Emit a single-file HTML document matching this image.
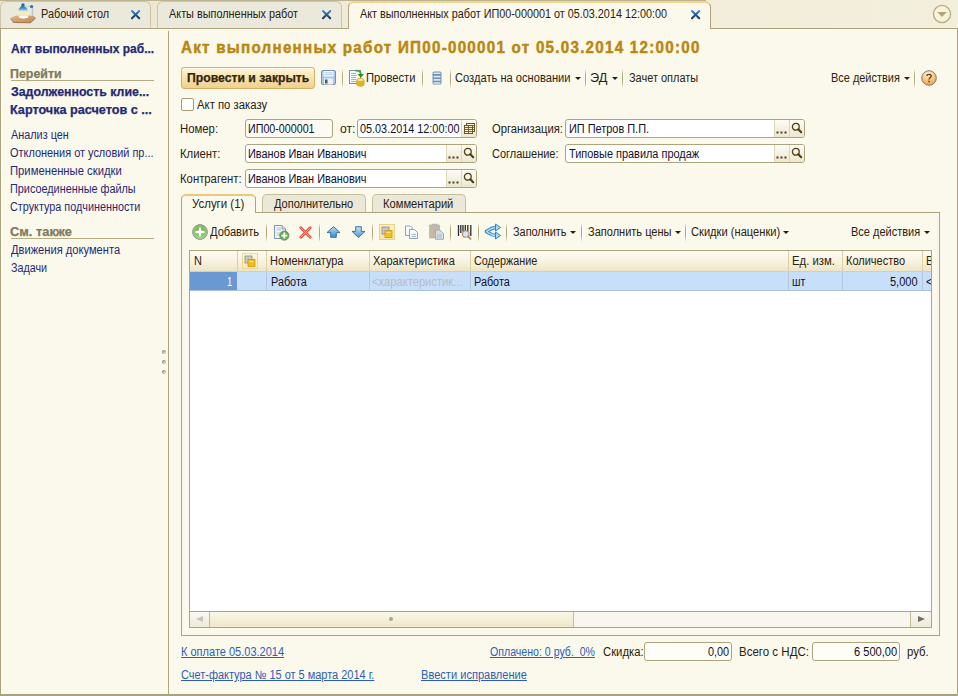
<!DOCTYPE html>
<html><head><meta charset="utf-8">
<style>
*{box-sizing:border-box;margin:0;padding:0}
html,body{width:958px;height:696px;overflow:hidden}
body{position:relative;background:#FBF9EC;font-family:"Liberation Sans",sans-serif;font-size:12px;color:#2A2210}
.a{position:absolute}
svg{position:absolute;display:block}
.t{position:absolute;white-space:nowrap;line-height:14px;font-size:12px}
</style></head><body>
<div class="a" style="left:0px;top:0px;width:958px;height:29px;background:linear-gradient(90deg,#ECE6CC,#F1ECD6 45%,#F3EFDD);border-bottom:1px solid #ADA47D"></div>
<div class="a" style="left:0px;top:0px;width:706px;height:1px;background:#BDB592"></div>
<div class="a" style="left:0px;top:1px;width:151px;height:27px;background:#EBE9DC;border:1px solid #CDC6A6;border-bottom:none;border-radius:6px 6px 0 0"></div>
<div class="a" style="left:157px;top:1px;width:185px;height:27px;background:#EBE9DC;border:1px solid #CDC6A6;border-bottom:none;border-radius:6px 6px 0 0"></div>
<div class="a" style="left:348px;top:1px;width:363px;height:28px;background:#FBF9EC;border:1px solid #ADA47D;border-top:2px solid #F5D48E;border-bottom:none;border-radius:6px 6px 0 0"></div>
<div class="t" style="top:7px;color:#2A2210;font-size:12px;left:40.60px;transform:scaleX(0.9048);transform-origin:0 0;">Рабочий стол</div>
<div class="t" style="top:7px;color:#2A2210;font-size:12px;left:169.31px;transform:scaleX(0.9064);transform-origin:0 0;">Акты выполненных работ</div>
<div class="t" style="top:7px;color:#2A2210;font-size:12px;left:360.31px;transform:scaleX(0.9020);transform-origin:0 0;">Акт выполненных работ ИП00-000001 от 05.03.2014 12:00:00</div>
<div class="a" style="left:0px;top:28px;width:1px;height:668px;background:#A9A27C"></div>
<div class="a" style="left:1px;top:29px;width:1px;height:665px;background:#FFFFF6"></div>
<div class="a" style="left:957px;top:28px;width:1px;height:668px;background:#A9A27C"></div>
<div class="a" style="left:0px;top:694px;width:958px;height:2px;background:#A9A27C"></div>
<div class="a" style="left:168px;top:31px;width:1px;height:663px;background:#ADA47D"></div>
<div class="t" style="top:42px;color:#1F2A74;font-size:12px;font-weight:bold;-webkit-text-stroke:0.25px currentColor;left:10.70px;transform:scaleX(0.9972);transform-origin:0 0;">Акт выполненных раб...</div>
<div class="t" style="top:67px;color:#827A5A;font-size:12px;font-weight:bold;-webkit-text-stroke:0.25px currentColor;left:10.17px;transform:scaleX(1.0352);transform-origin:0 0;">Перейти</div>
<div class="a" style="left:11px;top:80px;width:143px;height:1px;background:#B5AC84"></div>
<div class="t" style="top:85px;color:#1F2A74;font-size:12px;font-weight:bold;-webkit-text-stroke:0.25px currentColor;left:10.69px;transform:scaleX(1.0293);transform-origin:0 0;">Задолженность клие...</div>
<div class="t" style="top:103px;color:#1F2A74;font-size:12px;font-weight:bold;-webkit-text-stroke:0.25px currentColor;left:10.16px;transform:scaleX(1.0526);transform-origin:0 0;">Карточка расчетов с ...</div>
<div class="t" style="top:128px;color:#1F2A74;font-size:12px;left:10.91px;transform:scaleX(0.9048);transform-origin:0 0;">Анализ цен</div>
<div class="t" style="top:146px;color:#1F2A74;font-size:12px;left:10.45px;transform:scaleX(0.9103);transform-origin:0 0;">Отклонения от условий пр...</div>
<div class="t" style="top:164px;color:#1F2A74;font-size:12px;left:10.06px;transform:scaleX(0.9386);transform-origin:0 0;">Примененные скидки</div>
<div class="t" style="top:182px;color:#1F2A74;font-size:12px;left:10.10px;transform:scaleX(0.9038);transform-origin:0 0;">Присоединенные файлы</div>
<div class="t" style="top:200px;color:#1F2A74;font-size:12px;left:10.46px;transform:scaleX(0.9015);transform-origin:0 0;">Структура подчиненности</div>
<div class="t" style="top:225px;color:#827A5A;font-size:12px;font-weight:bold;-webkit-text-stroke:0.25px currentColor;left:10.46px;transform:scaleX(1.0721);transform-origin:0 0;">См. также</div>
<div class="a" style="left:11px;top:238px;width:143px;height:1px;background:#B5AC84"></div>
<div class="t" style="top:243px;color:#1F2A74;font-size:12px;left:10.91px;transform:scaleX(0.9277);transform-origin:0 0;">Движения документа</div>
<div class="t" style="top:261px;color:#1F2A74;font-size:12px;left:10.64px;transform:scaleX(0.8951);transform-origin:0 0;">Задачи</div>
<div class="t" style="left:181px;top:37px;font-size:16.5px;line-height:20px;font-weight:bold;letter-spacing:1.36px;transform:scaleX(0.92);transform-origin:0 0;color:#BA860C;-webkit-text-stroke:0.45px #BA860C">Акт выполненных работ ИП00-000001 от 05.03.2014 12:00:00</div>
<div class="a" style="left:181px;top:67px;width:134px;height:22px;border:1px solid #D5B066;border-radius:3px;background:linear-gradient(#FFF6DA,#F8E4B0 45%,#EFD08E);box-shadow:inset 0 1px 0 #FFFBEE"></div>
<div class="t" style="top:71px;color:#33250C;font-size:12px;font-weight:bold;-webkit-text-stroke:0.25px currentColor;left:186.69px;transform:scaleX(1.0168);transform-origin:0 0;">Провести и закрыть</div>
<div class="t" style="top:71px;color:#2A2210;font-size:12px;left:366.07px;transform:scaleX(0.9318);transform-origin:0 0;">Провести</div>
<div class="t" style="top:71px;color:#2A2210;font-size:12px;left:455.44px;transform:scaleX(0.9277);transform-origin:0 0;">Создать на основании</div>
<div class="t" style="top:71px;color:#2A2210;font-size:12px;left:590.37px;transform:scaleX(1.0581);transform-origin:0 0;">ЭД</div>
<div class="t" style="top:71px;color:#2A2210;font-size:12px;left:628.63px;transform:scaleX(0.9128);transform-origin:0 0;">Зачет оплаты</div>
<div class="t" style="top:71px;color:#2A2210;font-size:12px;left:830.59px;transform:scaleX(0.9118);transform-origin:0 0;">Все действия</div>
<div class="a" style="left:575px;top:77px;width:0;height:0;border-left:3px solid transparent;border-right:3px solid transparent;border-top:3px solid #2A1E08"></div>
<div class="a" style="left:612px;top:77px;width:0;height:0;border-left:3px solid transparent;border-right:3px solid transparent;border-top:3px solid #2A1E08"></div>
<div class="a" style="left:904px;top:77px;width:0;height:0;border-left:3px solid transparent;border-right:3px solid transparent;border-top:3px solid #2A1E08"></div>
<div class="a" style="left:342px;top:69px;width:1px;height:19px;background:linear-gradient(rgba(170,160,120,0),#B0A67C 30%,#B0A67C 70%,rgba(170,160,120,0))"></div>
<div class="a" style="left:343px;top:69px;width:1px;height:19px;background:linear-gradient(rgba(255,255,255,0),#FFFFFF 30%,#FFFFFF 70%,rgba(255,255,255,0))"></div>
<div class="a" style="left:422px;top:69px;width:1px;height:19px;background:linear-gradient(rgba(170,160,120,0),#B0A67C 30%,#B0A67C 70%,rgba(170,160,120,0))"></div>
<div class="a" style="left:423px;top:69px;width:1px;height:19px;background:linear-gradient(rgba(255,255,255,0),#FFFFFF 30%,#FFFFFF 70%,rgba(255,255,255,0))"></div>
<div class="a" style="left:450px;top:69px;width:1px;height:19px;background:linear-gradient(rgba(170,160,120,0),#B0A67C 30%,#B0A67C 70%,rgba(170,160,120,0))"></div>
<div class="a" style="left:451px;top:69px;width:1px;height:19px;background:linear-gradient(rgba(255,255,255,0),#FFFFFF 30%,#FFFFFF 70%,rgba(255,255,255,0))"></div>
<div class="a" style="left:585px;top:69px;width:1px;height:19px;background:linear-gradient(rgba(170,160,120,0),#B0A67C 30%,#B0A67C 70%,rgba(170,160,120,0))"></div>
<div class="a" style="left:586px;top:69px;width:1px;height:19px;background:linear-gradient(rgba(255,255,255,0),#FFFFFF 30%,#FFFFFF 70%,rgba(255,255,255,0))"></div>
<div class="a" style="left:622px;top:69px;width:1px;height:19px;background:linear-gradient(rgba(170,160,120,0),#B0A67C 30%,#B0A67C 70%,rgba(170,160,120,0))"></div>
<div class="a" style="left:623px;top:69px;width:1px;height:19px;background:linear-gradient(rgba(255,255,255,0),#FFFFFF 30%,#FFFFFF 70%,rgba(255,255,255,0))"></div>
<div class="a" style="left:914px;top:69px;width:1px;height:19px;background:linear-gradient(rgba(170,160,120,0),#B0A67C 30%,#B0A67C 70%,rgba(170,160,120,0))"></div>
<div class="a" style="left:915px;top:69px;width:1px;height:19px;background:linear-gradient(rgba(255,255,255,0),#FFFFFF 30%,#FFFFFF 70%,rgba(255,255,255,0))"></div>
<div class="a" style="left:181px;top:98px;width:13px;height:13px;border:1px solid #A39B76;border-radius:2px;background:#fff"></div>
<div class="t" style="top:98px;color:#2A2210;font-size:12px;left:197.21px;transform:scaleX(0.9434);transform-origin:0 0;">Акт по заказу</div>
<div class="t" style="top:122px;color:#2A2210;font-size:12px;left:180.35px;transform:scaleX(0.9450);transform-origin:0 0;">Номер:</div>
<div class="t" style="top:147px;color:#2A2210;font-size:12px;left:180.36px;transform:scaleX(0.9435);transform-origin:0 0;">Клиент:</div>
<div class="t" style="top:172px;color:#2A2210;font-size:12px;left:180.36px;transform:scaleX(0.9431);transform-origin:0 0;">Контрагент:</div>
<div class="t" style="top:122px;color:#2A2210;font-size:12px;left:340.39px;transform:scaleX(1.0147);transform-origin:0 0;">от:</div>
<div class="t" style="top:122px;color:#2A2210;font-size:12px;left:492.14px;transform:scaleX(0.9365);transform-origin:0 0;">Организация:</div>
<div class="t" style="top:147px;color:#2A2210;font-size:12px;left:492.15px;transform:scaleX(0.9142);transform-origin:0 0;">Соглашение:</div>
<div class="a" style="left:245px;top:119px;width:88px;height:19px;border:1px solid #ADA37C;border-radius:3px;background:#FCFAF2"></div>
<div class="a" style="left:357px;top:119px;width:120px;height:19px;border:1px solid #ADA37C;border-radius:3px;background:#fff"></div>
<div class="a" style="left:461px;top:120px;width:15px;height:17px;border-left:1px solid #DDD6B8;background:linear-gradient(#FDFCF6,#EDE7D0);border-radius:0 2px 2px 0"></div>
<div class="a" style="left:245px;top:144px;width:232px;height:19px;border:1px solid #ADA37C;border-radius:3px;background:#fff"></div>
<div class="a" style="left:446px;top:145px;width:15px;height:17px;border-left:1px solid #DDD6B8;background:linear-gradient(#FDFCF6,#EDE7D0)"></div>
<div class="a" style="left:461px;top:145px;width:15px;height:17px;border-left:1px solid #DDD6B8;background:linear-gradient(#FDFCF6,#EDE7D0);border-radius:0 2px 2px 0"></div>
<div class="a" style="left:245px;top:169px;width:232px;height:19px;border:1px solid #ADA37C;border-radius:3px;background:#fff"></div>
<div class="a" style="left:446px;top:170px;width:15px;height:17px;border-left:1px solid #DDD6B8;background:linear-gradient(#FDFCF6,#EDE7D0)"></div>
<div class="a" style="left:461px;top:170px;width:15px;height:17px;border-left:1px solid #DDD6B8;background:linear-gradient(#FDFCF6,#EDE7D0);border-radius:0 2px 2px 0"></div>
<div class="a" style="left:565px;top:119px;width:240px;height:19px;border:1px solid #ADA37C;border-radius:3px;background:#fff"></div>
<div class="a" style="left:774px;top:120px;width:15px;height:17px;border-left:1px solid #DDD6B8;background:linear-gradient(#FDFCF6,#EDE7D0)"></div>
<div class="a" style="left:789px;top:120px;width:15px;height:17px;border-left:1px solid #DDD6B8;background:linear-gradient(#FDFCF6,#EDE7D0);border-radius:0 2px 2px 0"></div>
<div class="a" style="left:565px;top:144px;width:240px;height:19px;border:1px solid #ADA37C;border-radius:3px;background:#fff"></div>
<div class="a" style="left:774px;top:145px;width:15px;height:17px;border-left:1px solid #DDD6B8;background:linear-gradient(#FDFCF6,#EDE7D0)"></div>
<div class="a" style="left:789px;top:145px;width:15px;height:17px;border-left:1px solid #DDD6B8;background:linear-gradient(#FDFCF6,#EDE7D0);border-radius:0 2px 2px 0"></div>
<div class="t" style="top:122px;color:#10102A;font-size:12px;left:247.61px;transform:scaleX(0.8919);transform-origin:0 0;">ИП00-000001</div>
<div class="t" style="top:122px;color:#10102A;font-size:12px;left:359.55px;transform:scaleX(0.9038);transform-origin:0 0;">05.03.2014 12:00:00</div>
<div class="t" style="top:147px;color:#10102A;font-size:12px;left:248.09px;transform:scaleX(0.9097);transform-origin:0 0;">Иванов Иван Иванович</div>
<div class="t" style="top:172px;color:#10102A;font-size:12px;left:248.09px;transform:scaleX(0.9097);transform-origin:0 0;">Иванов Иван Иванович</div>
<div class="t" style="top:122px;color:#10102A;font-size:12px;left:568.5px;transform:scaleX(0.91);transform-origin:0 0;">ИП Петров П.П.</div>
<div class="t" style="top:147px;color:#10102A;font-size:12px;left:568.5px;transform:scaleX(0.91);transform-origin:0 0;">Типовые правила продаж</div>
<div class="a" style="left:181px;top:212px;width:759px;height:424px;border:1px solid #ADA47D"></div>
<div class="a" style="left:262px;top:194px;width:104px;height:18px;background:#EBE8D8;border:1px solid #C6BE9C;border-bottom:none;border-radius:5px 5px 0 0"></div>
<div class="a" style="left:372px;top:194px;width:94px;height:18px;background:#EBE8D8;border:1px solid #C6BE9C;border-bottom:none;border-radius:5px 5px 0 0"></div>
<div class="a" style="left:181px;top:194px;width:75px;height:19px;background:#FBF9EC;border:1px solid #ADA47D;border-top:2px solid #EDC77E;border-bottom:none;border-radius:5px 5px 0 0"></div>
<div class="t" style="top:197px;color:#2A2210;font-size:12px;left:192.32px;transform:scaleX(0.9535);transform-origin:0 0;">Услуги (1)</div>
<div class="t" style="top:197px;color:#2A2210;font-size:12px;left:274.21px;transform:scaleX(0.9172);transform-origin:0 0;">Дополнительно</div>
<div class="t" style="top:197px;color:#2A2210;font-size:12px;left:382.87px;transform:scaleX(0.9309);transform-origin:0 0;">Комментарий</div>
<div class="t" style="top:225px;color:#2A2210;font-size:12px;left:210.11px;transform:scaleX(0.9256);transform-origin:0 0;">Добавить</div>
<div class="t" style="top:225px;color:#2A2210;font-size:12px;left:512.84px;transform:scaleX(0.9069);transform-origin:0 0;">Заполнить</div>
<div class="t" style="top:225px;color:#2A2210;font-size:12px;left:587.93px;transform:scaleX(0.9186);transform-origin:0 0;">Заполнить цены</div>
<div class="t" style="top:225px;color:#2A2210;font-size:12px;left:691.14px;transform:scaleX(0.9273);transform-origin:0 0;">Скидки (наценки)</div>
<div class="t" style="top:225px;color:#2A2210;font-size:12px;left:850.58px;transform:scaleX(0.9159);transform-origin:0 0;">Все действия</div>
<div class="a" style="left:570px;top:231px;width:0;height:0;border-left:3px solid transparent;border-right:3px solid transparent;border-top:3px solid #2A1E08"></div>
<div class="a" style="left:675px;top:231px;width:0;height:0;border-left:3px solid transparent;border-right:3px solid transparent;border-top:3px solid #2A1E08"></div>
<div class="a" style="left:783px;top:231px;width:0;height:0;border-left:3px solid transparent;border-right:3px solid transparent;border-top:3px solid #2A1E08"></div>
<div class="a" style="left:924px;top:231px;width:0;height:0;border-left:3px solid transparent;border-right:3px solid transparent;border-top:3px solid #2A1E08"></div>
<div class="a" style="left:266px;top:223px;width:1px;height:19px;background:linear-gradient(rgba(170,160,120,0),#B0A67C 30%,#B0A67C 70%,rgba(170,160,120,0))"></div>
<div class="a" style="left:267px;top:223px;width:1px;height:19px;background:linear-gradient(rgba(255,255,255,0),#FFFFFF 30%,#FFFFFF 70%,rgba(255,255,255,0))"></div>
<div class="a" style="left:319px;top:223px;width:1px;height:19px;background:linear-gradient(rgba(170,160,120,0),#B0A67C 30%,#B0A67C 70%,rgba(170,160,120,0))"></div>
<div class="a" style="left:320px;top:223px;width:1px;height:19px;background:linear-gradient(rgba(255,255,255,0),#FFFFFF 30%,#FFFFFF 70%,rgba(255,255,255,0))"></div>
<div class="a" style="left:372px;top:223px;width:1px;height:19px;background:linear-gradient(rgba(170,160,120,0),#B0A67C 30%,#B0A67C 70%,rgba(170,160,120,0))"></div>
<div class="a" style="left:373px;top:223px;width:1px;height:19px;background:linear-gradient(rgba(255,255,255,0),#FFFFFF 30%,#FFFFFF 70%,rgba(255,255,255,0))"></div>
<div class="a" style="left:450px;top:223px;width:1px;height:19px;background:linear-gradient(rgba(170,160,120,0),#B0A67C 30%,#B0A67C 70%,rgba(170,160,120,0))"></div>
<div class="a" style="left:451px;top:223px;width:1px;height:19px;background:linear-gradient(rgba(255,255,255,0),#FFFFFF 30%,#FFFFFF 70%,rgba(255,255,255,0))"></div>
<div class="a" style="left:478px;top:223px;width:1px;height:19px;background:linear-gradient(rgba(170,160,120,0),#B0A67C 30%,#B0A67C 70%,rgba(170,160,120,0))"></div>
<div class="a" style="left:479px;top:223px;width:1px;height:19px;background:linear-gradient(rgba(255,255,255,0),#FFFFFF 30%,#FFFFFF 70%,rgba(255,255,255,0))"></div>
<div class="a" style="left:506px;top:223px;width:1px;height:19px;background:linear-gradient(rgba(170,160,120,0),#B0A67C 30%,#B0A67C 70%,rgba(170,160,120,0))"></div>
<div class="a" style="left:507px;top:223px;width:1px;height:19px;background:linear-gradient(rgba(255,255,255,0),#FFFFFF 30%,#FFFFFF 70%,rgba(255,255,255,0))"></div>
<div class="a" style="left:581px;top:223px;width:1px;height:19px;background:linear-gradient(rgba(170,160,120,0),#B0A67C 30%,#B0A67C 70%,rgba(170,160,120,0))"></div>
<div class="a" style="left:582px;top:223px;width:1px;height:19px;background:linear-gradient(rgba(255,255,255,0),#FFFFFF 30%,#FFFFFF 70%,rgba(255,255,255,0))"></div>
<div class="a" style="left:685px;top:223px;width:1px;height:19px;background:linear-gradient(rgba(170,160,120,0),#B0A67C 30%,#B0A67C 70%,rgba(170,160,120,0))"></div>
<div class="a" style="left:686px;top:223px;width:1px;height:19px;background:linear-gradient(rgba(255,255,255,0),#FFFFFF 30%,#FFFFFF 70%,rgba(255,255,255,0))"></div>
<div class="a" style="left:189px;top:250px;width:743px;height:378px;border:1px solid #ADA47D;background:#fff"></div>
<div class="a" style="left:190px;top:251px;width:741px;height:21px;background:linear-gradient(#FDFBF3,#F7F1DC 60%,#EEE4C4);border-bottom:1px solid #D9CFA8"></div>
<div class="a" style="left:190px;top:272px;width:741px;height:19px;background:#C8DFF9;border-bottom:1px solid #A8C2E0"></div>
<div class="a" style="left:190px;top:272px;width:47px;height:18px;background:#6A98D2"></div>
<div class="a" style="left:237px;top:251px;width:1px;height:20px;background:#D9CFA8"></div>
<div class="a" style="left:266px;top:251px;width:1px;height:20px;background:#D9CFA8"></div>
<div class="a" style="left:369px;top:251px;width:1px;height:20px;background:#D9CFA8"></div>
<div class="a" style="left:470px;top:251px;width:1px;height:20px;background:#D9CFA8"></div>
<div class="a" style="left:788px;top:251px;width:1px;height:20px;background:#D9CFA8"></div>
<div class="a" style="left:842px;top:251px;width:1px;height:20px;background:#D9CFA8"></div>
<div class="a" style="left:922px;top:251px;width:1px;height:20px;background:#D9CFA8"></div>
<div class="a" style="left:266px;top:272px;width:1px;height:18px;background:#B4C8DF"></div>
<div class="a" style="left:369px;top:272px;width:1px;height:18px;background:#B4C8DF"></div>
<div class="a" style="left:470px;top:272px;width:1px;height:18px;background:#B4C8DF"></div>
<div class="a" style="left:788px;top:272px;width:1px;height:18px;background:#B4C8DF"></div>
<div class="a" style="left:842px;top:272px;width:1px;height:18px;background:#B4C8DF"></div>
<div class="a" style="left:922px;top:272px;width:1px;height:18px;background:#B4C8DF"></div>
<div class="t" style="top:254px;color:#2A2210;font-size:12px;left:193.5px;transform:scaleX(0.91);transform-origin:0 0;">N</div>
<div class="t" style="top:254px;color:#2A2210;font-size:12px;left:270.49px;transform:scaleX(0.9119);transform-origin:0 0;">Номенклатура</div>
<div class="t" style="top:254px;color:#2A2210;font-size:12px;left:372.82px;transform:scaleX(0.9168);transform-origin:0 0;">Характеристика</div>
<div class="t" style="top:254px;color:#2A2210;font-size:12px;left:474.26px;transform:scaleX(0.9014);transform-origin:0 0;">Содержание</div>
<div class="t" style="top:254px;color:#2A2210;font-size:12px;left:792.26px;transform:scaleX(0.9424);transform-origin:0 0;">Ед. изм.</div>
<div class="t" style="top:254px;color:#2A2210;font-size:12px;left:846.38px;transform:scaleX(0.9159);transform-origin:0 0;">Количество</div>
<div class="a" style="left:923px;top:251px;width:8px;height:20px;overflow:hidden"><div class="t" style="left:3px;top:3px;transform:scaleX(0.91);transform-origin:0 0">В</div></div>
<div class="a" style="left:923px;top:272px;width:8px;height:18px;overflow:hidden"><div class="t" style="left:3px;top:3px;transform:scaleX(0.91);transform-origin:0 0;color:#10102A">&lt;</div></div>
<div class="t" style="top:275px;color:#FFFFFF;font-size:12px;left:226.79px;transform:scaleX(0.7885);transform-origin:0 0;">1</div>
<div class="t" style="top:275px;color:#10102A;font-size:12px;left:270.50px;transform:scaleX(0.9041);transform-origin:0 0;">Работа</div>
<div class="t" style="top:275px;color:#B8BCC4;font-size:12px;left:372.44px;transform:scaleX(0.9319);transform-origin:0 0;">&lt;характеристик...</div>
<div class="t" style="top:275px;color:#10102A;font-size:12px;left:473.90px;transform:scaleX(0.9041);transform-origin:0 0;">Работа</div>
<div class="t" style="top:275px;color:#10102A;font-size:12px;left:792.30px;transform:scaleX(0.8794);transform-origin:0 0;">шт</div>
<div class="t" style="top:275px;color:#10102A;font-size:12px;left:890.24px;transform:scaleX(0.9175);transform-origin:0 0;">5,000</div>
<div class="a" style="left:189px;top:611px;width:743px;height:17px;border:1px solid #ADA47D;background:#F8F6EF"></div>
<div class="a" style="left:190px;top:612px;width:20px;height:15px;background:linear-gradient(#FAF8F0,#EEEAD8);border-right:1px solid #C4BB94"></div>
<div class="a" style="left:210px;top:612px;width:364px;height:15px;background:linear-gradient(#FAF7E6,#EFE8C8);border-right:1px solid #C4BB94"></div>
<div class="a" style="left:910px;top:612px;width:21px;height:15px;background:linear-gradient(#FAF8F0,#EEEAD8);border-left:1px solid #C4BB94"></div>
<div class="a" style="left:196px;top:616px;width:0;height:0;border-top:3.5px solid transparent;border-bottom:3.5px solid transparent;border-right:7px solid #C4C4BC"></div>
<div class="a" style="left:918px;top:616px;width:0;height:0;border-top:3.5px solid transparent;border-bottom:3.5px solid transparent;border-left:7px solid #707070"></div>
<div class="a" style="left:389px;top:617px;width:4px;height:4px;border-radius:2px;background:#A8A890"></div>
<div class="a" style="left:162px;top:350px;width:4px;height:4px;border-radius:2px;background:radial-gradient(circle at 65% 65%,#E4E0CC,#8E8A6C 70%)"></div>
<div class="a" style="left:162px;top:360px;width:4px;height:4px;border-radius:2px;background:radial-gradient(circle at 65% 65%,#E4E0CC,#8E8A6C 70%)"></div>
<div class="a" style="left:162px;top:370px;width:4px;height:4px;border-radius:2px;background:radial-gradient(circle at 65% 65%,#E4E0CC,#8E8A6C 70%)"></div>
<div class="t" style="top:645px;color:#2D5DB5;font-size:12px;left:180.58px;transform:scaleX(0.9180);transform-origin:0 0;text-decoration:underline;">К оплате 05.03.2014</div>
<div class="t" style="top:668px;color:#2D5DB5;font-size:12px;left:181.35px;transform:scaleX(0.9129);transform-origin:0 0;text-decoration:underline;">Счет-фактура № 15 от 5 марта 2014 г.</div>
<div class="t" style="top:645px;color:#2D5DB5;font-size:12px;left:490.17px;transform:scaleX(0.8822);transform-origin:0 0;text-decoration:underline;">Оплачено: 0 руб.&nbsp; 0%</div>
<div class="t" style="top:668px;color:#2D5DB5;font-size:12px;left:421.08px;transform:scaleX(0.9232);transform-origin:0 0;text-decoration:underline;">Ввести исправление</div>
<div class="t" style="top:645px;color:#2A2210;font-size:12px;left:603.23px;transform:scaleX(0.9420);transform-origin:0 0;">Скидка:</div>
<div class="a" style="left:644px;top:642px;width:88px;height:19px;border:1px solid #ADA37C;border-radius:3px;background:#FEFDF7"></div>
<div class="t" style="top:645px;color:#10102A;font-size:12px;left:707.65px;transform:scaleX(0.9062);transform-origin:0 0;">0,00</div>
<div class="t" style="top:645px;color:#2A2210;font-size:12px;left:739.44px;transform:scaleX(0.9590);transform-origin:0 0;">Всего с НДС:</div>
<div class="a" style="left:812px;top:642px;width:88px;height:19px;border:1px solid #ADA37C;border-radius:3px;background:#FEFDF7"></div>
<div class="t" style="top:645px;color:#10102A;font-size:12px;left:854.24px;transform:scaleX(0.9254);transform-origin:0 0;">6 500,00</div>
<div class="t" style="top:645px;color:#2A2210;font-size:12px;left:906.75px;transform:scaleX(0.9429);transform-origin:0 0;">руб.</div>
<!-- ICONS -->
<!-- lamp -->
<svg class="a" style="left:0;top:0" width="40" height="28" viewBox="0 0 40 28">
<defs><linearGradient id="wood" x1="0" y1="0" x2="1" y2="1"><stop offset="0" stop-color="#E4B888"/><stop offset="1" stop-color="#C08A58"/></linearGradient>
<linearGradient id="shade" x1="0" y1="0" x2="0" y2="1"><stop offset="0" stop-color="#145894"/><stop offset="0.6" stop-color="#3C88C4"/><stop offset="1" stop-color="#A8D4F0"/></linearGradient>
<linearGradient id="cone" x1="0" y1="0" x2="0" y2="1"><stop offset="0" stop-color="#F4EC90"/><stop offset="1" stop-color="#F8F0C8" stop-opacity="0.4"/></linearGradient></defs>
<path d="M10.5 18 L16 15.5 L33 15.5 L35.5 17.5 L30.5 21.5 L13.5 21.5 Z" fill="url(#wood)"/>
<path d="M10.5 18 L13.5 21.5 L30.5 21.5 L35.5 17.5 L35.5 18.8 L30.5 23.2 L13.5 23 L10.5 19.3 Z" fill="#A87850"/>
<ellipse cx="23.5" cy="17" rx="4.8" ry="1.4" fill="#FFFFFF" opacity="0.95"/>
<path d="M18.5 10.5 L27.5 10.5 L29 16 L17 16 Z" fill="url(#cone)"/>
<path d="M21.8 3.5 L24.2 3.5 L24.8 6 L27.3 9 L27.5 10.8 L18.5 10.8 L18.7 9 L21.2 6 Z" fill="url(#shade)"/>
<path d="M24.5 6.5 L31 6.5" stroke="#D0D6DE" stroke-width="1.4"/>
<circle cx="31.6" cy="6.6" r="1.7" fill="#2A78BC"/>
<rect x="31" y="8" width="2.2" height="8" fill="#DADCE2"/>
<rect x="32.3" y="8" width="0.9" height="8" fill="#B8BCC6"/>
</svg>
<!-- close X -->
<svg class="a" style="left:130px;top:9px" width="12" height="12" viewBox="0 0 12 12"><defs><linearGradient id="xg" x1="0" y1="0" x2="0" y2="1"><stop offset="0" stop-color="#3C86C4"/><stop offset="1" stop-color="#15355A"/></linearGradient></defs><path d="M2 2 L9.2 9.2 M9.2 2 L2 9.2" stroke="url(#xg)" stroke-width="2" stroke-linecap="round"/></svg>
<svg class="a" style="left:321px;top:9px" width="12" height="12" viewBox="0 0 12 12"><defs><linearGradient id="xg" x1="0" y1="0" x2="0" y2="1"><stop offset="0" stop-color="#3C86C4"/><stop offset="1" stop-color="#15355A"/></linearGradient></defs><path d="M2 2 L9.2 9.2 M9.2 2 L2 9.2" stroke="url(#xg)" stroke-width="2" stroke-linecap="round"/></svg>
<svg class="a" style="left:690px;top:9px" width="12" height="12" viewBox="0 0 12 12"><defs><linearGradient id="xg" x1="0" y1="0" x2="0" y2="1"><stop offset="0" stop-color="#3C86C4"/><stop offset="1" stop-color="#15355A"/></linearGradient></defs><path d="M2 2 L9.2 9.2 M9.2 2 L2 9.2" stroke="url(#xg)" stroke-width="2" stroke-linecap="round"/></svg>
<!-- top right circle -->
<svg class="a" style="left:932px;top:4px" width="20" height="20" viewBox="0 0 20 20"><circle cx="10" cy="10" r="8.6" fill="#F8F2D8" stroke="#B4AC84" stroke-width="1.3"/><path d="M5.2 8 L14.8 8 L10 13 Z" fill="#B0A878"/></svg>

<!-- floppy -->
<svg class="a" style="left:321px;top:70px" width="15" height="15" viewBox="0 0 15 15">
<rect x="0.5" y="0.5" width="14" height="14" rx="1.5" fill="#A9C8E4" stroke="#7590AC"/>
<rect x="2.5" y="1" width="10" height="5.5" fill="#F4F8FC"/>
<path d="M3.5 2.8 H11.5 M3.5 4.6 H11.5" stroke="#B0D0E8" stroke-width="1"/>
<rect x="3" y="8.5" width="9" height="6" fill="#F0F0F0"/>
<rect x="4" y="9.5" width="2.5" height="4" fill="#4A5A6A"/>
</svg>
<!-- post icon -->
<svg class="a" style="left:348px;top:69px" width="17" height="18" viewBox="0 0 17 18">
<rect x="1.5" y="1.5" width="11" height="13" fill="#F6F9FC" stroke="#7890AC"/>
<path d="M3 4.5 H8 M3 6.5 H9 M3 8.5 H8 M3 10.5 H8 M3 12.5 H8" stroke="#A4B8CC"/>
<path d="M7.5 1.8 C10.5 1.2 12.8 2.2 12.8 5.2" stroke="#4AA23A" stroke-width="1.8" fill="none"/>
<path d="M9.6 5 L16 5 L12.8 8.8 Z" fill="#2C8A1E"/>
<path d="M8.8 11 V15.6 A3.6 1.7 0 0 0 16 15.6 V11" fill="#EEC030" stroke="#C89A18" stroke-width="0.7"/>
<ellipse cx="12.4" cy="11" rx="3.6" ry="1.7" fill="#FAE68A" stroke="#C89A18" stroke-width="0.7"/>
<path d="M8.8 12.6 A3.6 1.7 0 0 0 16 12.6 M8.8 14.2 A3.6 1.7 0 0 0 16 14.2" stroke="#D0A020" stroke-width="0.7" fill="none"/>
</svg>
<!-- list icon -->
<svg class="a" style="left:432px;top:71px" width="10" height="14" viewBox="0 0 10 14">
<rect x="0.5" y="0.5" width="9" height="13" rx="1.5" fill="#7090B0"/>
<path d="M1.5 2.3 H8.5 M1.5 5.6 H8.5 M1.5 8.9 H8.5 M1.5 12 H8.5" stroke="#D8E8F4" stroke-width="1.6"/>
</svg>
<!-- help -->
<svg class="a" style="left:921px;top:70px" width="16" height="16" viewBox="0 0 16 16">
<defs><radialGradient id="hg" cx="0.45" cy="0.25" r="0.8"><stop offset="0" stop-color="#FFF4E0"/><stop offset="0.6" stop-color="#F8C070"/><stop offset="1" stop-color="#EE9A30"/></radialGradient></defs>
<circle cx="8" cy="8" r="7.3" fill="url(#hg)" stroke="#807C88" stroke-width="1"/>
<path d="M5.9 6 C5.9 3.9 10.2 3.9 10.2 6 C10.2 7.5 8 7.6 8 9.6" stroke="#6A3A18" stroke-width="1.35" fill="none"/>
<rect x="7.2" y="10.7" width="1.6" height="1.5" fill="#6A3A18"/>
</svg>
<!-- field button icons -->
<svg class="a" style="left:462px;top:121px" width="14" height="14" viewBox="0 0 14 14">
<rect x="4.5" y="2.5" width="8" height="8" fill="#F6F0DC" stroke="#6B5520"/>
<path d="M4.5 4.5 H12.5 M4.5 6.5 H12.5 M4.5 8.5 H12.5" stroke="#6B5520" stroke-width="0.8"/>
<rect x="2.5" y="4.5" width="8" height="8" fill="#F6F0DC" stroke="#6B5520"/>
<path d="M2.5 6.5 H10.5 M2.5 8.5 H10.5 M2.5 10.5 H10.5 M6.5 4.5 V12.5" stroke="#6B5520" stroke-width="0.9"/>
</svg>
<svg class="a" style="left:448px;top:156px" width="12" height="3" viewBox="0 0 12 3"><rect x="0.5" y="0.5" width="2" height="2" fill="#4E3E14"/><rect x="4.5" y="0.5" width="2" height="2" fill="#4E3E14"/><rect x="8.5" y="0.5" width="2" height="2" fill="#4E3E14"/></svg><svg class="a" style="left:463px;top:147px" width="12" height="12" viewBox="0 0 12 12"><circle cx="4.8" cy="4.8" r="3.4" stroke="#4E3E14" stroke-width="1.3" fill="none"/><path d="M7.3 7.3 L10.2 10.2" stroke="#4E3E14" stroke-width="2.1" stroke-linecap="round"/></svg>
<svg class="a" style="left:448px;top:181px" width="12" height="3" viewBox="0 0 12 3"><rect x="0.5" y="0.5" width="2" height="2" fill="#4E3E14"/><rect x="4.5" y="0.5" width="2" height="2" fill="#4E3E14"/><rect x="8.5" y="0.5" width="2" height="2" fill="#4E3E14"/></svg><svg class="a" style="left:463px;top:172px" width="12" height="12" viewBox="0 0 12 12"><circle cx="4.8" cy="4.8" r="3.4" stroke="#4E3E14" stroke-width="1.3" fill="none"/><path d="M7.3 7.3 L10.2 10.2" stroke="#4E3E14" stroke-width="2.1" stroke-linecap="round"/></svg>
<svg class="a" style="left:776px;top:131px" width="12" height="3" viewBox="0 0 12 3"><rect x="0.5" y="0.5" width="2" height="2" fill="#4E3E14"/><rect x="4.5" y="0.5" width="2" height="2" fill="#4E3E14"/><rect x="8.5" y="0.5" width="2" height="2" fill="#4E3E14"/></svg><svg class="a" style="left:791px;top:122px" width="12" height="12" viewBox="0 0 12 12"><circle cx="4.8" cy="4.8" r="3.4" stroke="#4E3E14" stroke-width="1.3" fill="none"/><path d="M7.3 7.3 L10.2 10.2" stroke="#4E3E14" stroke-width="2.1" stroke-linecap="round"/></svg>
<svg class="a" style="left:776px;top:156px" width="12" height="3" viewBox="0 0 12 3"><rect x="0.5" y="0.5" width="2" height="2" fill="#4E3E14"/><rect x="4.5" y="0.5" width="2" height="2" fill="#4E3E14"/><rect x="8.5" y="0.5" width="2" height="2" fill="#4E3E14"/></svg><svg class="a" style="left:791px;top:147px" width="12" height="12" viewBox="0 0 12 12"><circle cx="4.8" cy="4.8" r="3.4" stroke="#4E3E14" stroke-width="1.3" fill="none"/><path d="M7.3 7.3 L10.2 10.2" stroke="#4E3E14" stroke-width="2.1" stroke-linecap="round"/></svg>
<!-- panel toolbar icons -->
<svg class="a" style="left:192px;top:224px" width="16" height="16" viewBox="0 0 16 16">
<defs><radialGradient id="gg" cx="0.5" cy="0.4" r="0.6"><stop offset="0" stop-color="#5BA83E"/><stop offset="0.7" stop-color="#8CCB6C"/><stop offset="1" stop-color="#B0DC98"/></radialGradient></defs>
<circle cx="8" cy="8" r="7.4" fill="url(#gg)" stroke="#8A8A8A" stroke-width="0.9"/>
<path d="M8 3.6 V12.4 M3.6 8 H12.4" stroke="#fff" stroke-width="2.4"/>
</svg>
<svg class="a" style="left:273px;top:224px" width="17" height="17" viewBox="0 0 17 17">
<path d="M1.5 1.5 H9 L12.5 5 V14.5 H1.5 Z" fill="#F6FAFE" stroke="#7A94B0"/>
<path d="M9 1.5 V5 H12.5" fill="#C8D8E8" stroke="#7A94B0" stroke-width="0.8"/>
<path d="M3.5 4 H8 M3.5 6 H8 M3.5 9 H7 M3.5 11 H7" stroke="#A8C0D8"/>
<circle cx="11.3" cy="11.6" r="4.6" fill="#62B044" stroke="#6A7A6A" stroke-width="0.8"/>
<path d="M11.3 8.6 V14.6 M8.3 11.6 H14.3" stroke="#fff" stroke-width="1.8"/>
</svg>
<svg class="a" style="left:299px;top:226px" width="13" height="13" viewBox="0 0 13 13">
<path d="M1.8 1.8 L11.2 11.2 M11.2 1.8 L1.8 11.2" stroke="#E25340" stroke-width="2.8" stroke-linecap="round"/>
<path d="M1.8 1.8 L11.2 11.2 M11.2 1.8 L1.8 11.2" stroke="#F8A898" stroke-width="1" stroke-linecap="round"/>
</svg>
<svg class="a" style="left:326px;top:226px" width="15" height="12" viewBox="0 0 15 12">
<defs><linearGradient id="ua" x1="0" y1="0" x2="0" y2="1"><stop offset="0" stop-color="#B8DDF8"/><stop offset="1" stop-color="#3C8CCC"/></linearGradient></defs>
<path d="M7.5 0.6 L14 6.6 H10.3 V11.3 H4.7 V6.6 H1 Z" fill="url(#ua)" stroke="#2A6898" stroke-width="0.9" stroke-linejoin="round"/>
</svg>
<svg class="a" style="left:351px;top:226px" width="15" height="12" viewBox="0 0 15 12">
<defs><linearGradient id="da" x1="0" y1="0" x2="0" y2="1"><stop offset="0" stop-color="#C8E4FA"/><stop offset="1" stop-color="#4A96D4"/></linearGradient></defs>
<path d="M7.5 11.4 L14 5.4 H10.3 V0.7 H4.7 V5.4 H1 Z" fill="url(#da)" stroke="#2A6898" stroke-width="0.9" stroke-linejoin="round"/>
</svg>
<div class="a" style="left:379px;top:224px;width:16px;height:16px;border:1px solid #E8D28C;background:linear-gradient(#FCF0C4,#F6E4A8)"></div>
<svg class="a" style="left:380px;top:225px" width="14" height="14" viewBox="0 0 14 14">
<rect x="2" y="2" width="7" height="7" fill="#C8C8CC" stroke="#8C8C90" stroke-width="0.8"/>
<rect x="5" y="5.5" width="7" height="7" fill="#F0C020" stroke="#C89808" stroke-width="0.8"/>
<path d="M6.5 7.5 H10.5" stroke="#F8E890" stroke-width="1"/>
</svg>
<svg class="a" style="left:404px;top:225px" width="16" height="15" viewBox="0 0 16 15">
<path d="M1.5 1 H6.5 L8 2.5 V10.5 H1.5 Z" fill="#F6FAFE" stroke="#88A4BC"/>
<path d="M5.5 4.5 H10.5 L13.5 7.5 V13.5 H5.5 Z" fill="#F6FAFE" stroke="#88A4BC"/>
<path d="M7.5 9.5 H12 M7.5 11.5 H12" stroke="#A8BCD0"/>
</svg>
<svg class="a" style="left:428px;top:223px" width="18" height="17" viewBox="0 0 18 17">
<rect x="1.5" y="2" width="10" height="13" fill="#C8B8A8" stroke="#B8A898" stroke-width="0.6"/>
<rect x="3.5" y="0.8" width="6" height="2.6" rx="1.2" fill="#B8B8B8"/>
<path d="M7.5 7 H12 L15.5 10.5 V16.3 H7.5 Z" fill="#D8DCE0" stroke="#9AAEC0"/>
<path d="M9 12 H14 M9 14 H14" stroke="#A8BCD0"/>
</svg>
<svg class="a" style="left:456px;top:223px" width="18" height="18" viewBox="0 0 18 18">
<path d="M2.5 2 V13 M4.8 2 V10 M7 2 V8.5 M9.3 2 V8.5 M11.8 2 V10 M14.8 2 V13" stroke="#2A2A2A" stroke-width="1.3"/>
<circle cx="9.8" cy="11" r="3.3" fill="#D4E4FA" stroke="#B4876A" stroke-width="1.1"/>
<path d="M12.2 13.4 L14.5 15.8" stroke="#B4876A" stroke-width="1.9" stroke-linecap="round"/>
</svg>
<svg class="a" style="left:484px;top:222px" width="18" height="19" viewBox="0 0 18 19">
<path d="M2.5 9.5 C5 8 7 5.5 12 5.5 M2.5 9.5 C5 11 7 13.5 12 13.5" stroke="#2F86C8" stroke-width="3.6" fill="none" stroke-linecap="round"/>
<path d="M2.5 9.5 C5 8 7 5.5 12 5.5 M2.5 9.5 C5 11 7 13.5 12 13.5" stroke="#B0DEFA" stroke-width="1.4" fill="none" stroke-linecap="round"/>
<path d="M11.5 2 L16.5 5.5 L11.5 9 Z M11.5 10 L16.5 13.5 L11.5 17 Z" fill="#A8DAF8" stroke="#2F86C8" stroke-width="1" stroke-linejoin="round"/>
</svg>

<!-- grid header icon -->
<div class="a" style="left:242px;top:253px;width:16px;height:16px;border:1px solid #EAD898;background:linear-gradient(#FDF6D8,#F8EBB8)"></div>
<svg class="a" style="left:243px;top:254px" width="14" height="14" viewBox="0 0 14 14">
<rect x="2" y="2" width="7" height="7" fill="#C8C8CC" stroke="#8C8C90" stroke-width="0.8"/>
<rect x="5" y="5.5" width="7" height="7" fill="#F0C020" stroke="#C89808" stroke-width="0.8"/>
<path d="M6.5 7.5 H10.5" stroke="#F8E890" stroke-width="1"/>
</svg>

</body></html>
